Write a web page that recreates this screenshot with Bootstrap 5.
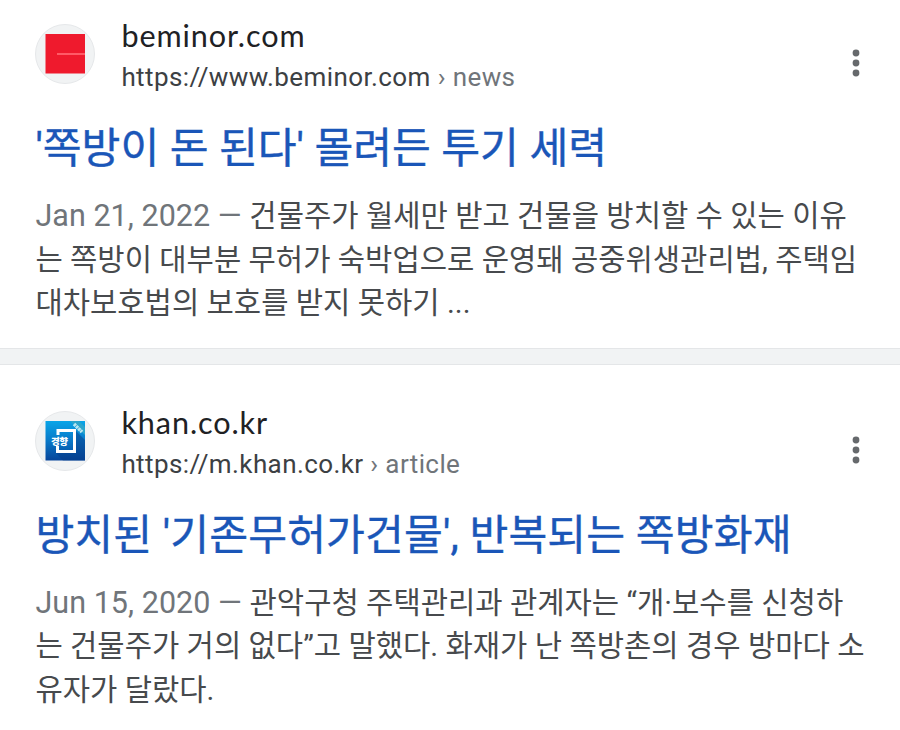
<!DOCTYPE html>
<html lang="ko">
<head>
<meta charset="utf-8">
<meta name="viewport" content="width=device-width, initial-scale=1">
<title>Search results</title>
<link href="https://cdn.jsdelivr.net/npm/bootstrap@5.3.0/dist/css/bootstrap.min.css" rel="stylesheet">
<style>
body{font-family:Roboto,"Noto Sans CJK KR",sans-serif;background:#fff;color:#474a4d;overflow:hidden}
.result{height:348px;padding:17px 28px 0 35.4px}
.result.second{height:365px;padding-top:38.6px}
.avatar{width:60px;height:60px;background:#f1f3f4;border:1px solid #e6e8ea;margin-top:7px}
.site{margin-left:26px}
.domain{font:400 30.6px/40px Lato,sans-serif;color:#202124;letter-spacing:.9px;margin-top:-1px;margin-bottom:1px}
.address{font-size:26px;line-height:40px;color:#3c4043;letter-spacing:.4px}
.address span,.date{color:#70757a}
.date{font-size:30.5px;line-height:1;letter-spacing:.05px}
.dots{margin:31px 12px 0 0}
.headline{font-size:42.2px;line-height:60px;color:#1a56b8;margin:22px 0 0;font-weight:400;-webkit-text-stroke:.4px #1a56b8}
.second .headline{letter-spacing:.13px}
.snippet{font-size:29.68px;line-height:43.7px;margin:15px 0 0}
.divider{height:17px;background:#f1f3f4;border-top:1px solid #e4e6e8;border-bottom:1px solid #e4e6e8}
</style>
</head>
<body>
<main>
<article class="result">
  <header class="d-flex align-items-start">
    <div class="avatar rounded-circle d-flex align-items-center justify-content-center flex-shrink-0">
      <svg width="40" height="40" viewBox="0 0 40 40"><path fill="#ef1a2d" d="M.5 0H40v39.500H.5z"/><path stroke="#ff5a66" stroke-width="2" d="M12 20h28"/></svg>
    </div>
    <div class="site flex-grow-1 text-nowrap">
      <div class="domain">beminor.com</div>
      <div class="address">https://www.beminor.com <span>› news</span></div>
    </div>
    <svg class="dots" width="8" height="30" viewBox="0 0 8 30" fill="#66696c"><circle cx="4" cy="5" r="3.4"/><circle cx="4" cy="15" r="3.4"/><circle cx="4" cy="25" r="3.4"/></svg>
  </header>
  <h3 class="headline text-nowrap">'쪽방이 돈 된다' 몰려든 투기 세력</h3>
  <p class="snippet text-nowrap"><span class="date">Jan 21, 2022 — </span>건물주가 월세만 받고 건물을 방치할 수 있는 이유<br>는 쪽방이 대부분 무허가 숙박업으로 운영돼 공중위생관리법, 주택임<br>대차보호법의 보호를 받지 못하기 ...</p>
</article>
<div class="divider"></div>
<article class="result second">
  <header class="d-flex align-items-start">
    <div class="avatar rounded-circle d-flex align-items-center justify-content-center flex-shrink-0">
      <svg width="40" height="40" viewBox="0 0 40 40">
        <defs><linearGradient id="sky" x1="0" y1="0" x2="0" y2="1"><stop offset="0" stop-color="#08a5e8"/><stop offset=".5" stop-color="#0878c8"/><stop offset="1" stop-color="#07459a"/></linearGradient></defs>
        <path fill="url(#sky)" d="M.5 0H40v39.500H.5z"/>
        <path fill="#053b87" opacity=".5" d="M31 10 40 19v20.500H18L11 32h20z"/>
        <path fill="#2aa5cc" d="M25 0h9l6 6v8z"/>
        <path stroke="#b9e6f0" stroke-width="3.500" stroke-dasharray="2.500 .6" d="m29 3 8 8"/>
        <path fill="none" stroke="#fff" stroke-width="3" d="M13 14V9.500h16.500v21H12.500V25"/>
        <text x="6" y="23.500" font-size="9.500" font-weight="900" fill="#fff" textLength="17" font-family="Noto Sans CJK KR, sans-serif">경향</text>
      </svg>
    </div>
    <div class="site flex-grow-1 text-nowrap">
      <div class="domain">khan.co.kr</div>
      <div class="address">https://m.khan.co.kr <span>› article</span></div>
    </div>
    <svg class="dots" width="8" height="30" viewBox="0 0 8 30" fill="#66696c"><circle cx="4" cy="5" r="3.4"/><circle cx="4" cy="15" r="3.4"/><circle cx="4" cy="25" r="3.4"/></svg>
  </header>
  <h3 class="headline text-nowrap">방치된 '기존무허가건물', 반복되는 쪽방화재</h3>
  <p class="snippet text-nowrap"><span class="date">Jun 15, 2020 — </span>관악구청 주택관리과 관계자는 “개·보수를 신청하<br>는 건물주가 거의 없다”고 말했다. 화재가 난 쪽방촌의 경우 방마다 소<br>유자가 달랐다.</p>
</article>
</main>
<script src="https://cdn.jsdelivr.net/npm/bootstrap@5.3.0/dist/js/bootstrap.bundle.min.js"></script>
</body>
</html>
